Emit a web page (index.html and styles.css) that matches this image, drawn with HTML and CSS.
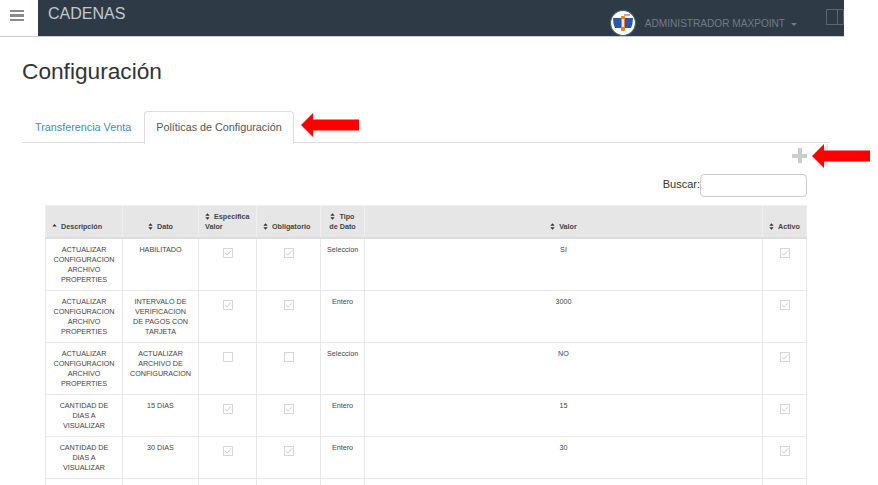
FILE: index.html
```
<!DOCTYPE html>
<html lang="es">
<head>
<meta charset="utf-8">
<title>Configuración</title>
<link rel="stylesheet" href="styles.css">
</head>
<body>
<svg class="defs" width="0" height="0" aria-hidden="true">
  <symbol id="sort" viewBox="0 0 6 8"><path d="M3 0 5.600 3.200H.400zM3 8 .400 4.800h5.200z"/></symbol>
  <symbol id="sort-up" viewBox="0 0 6 8"><path d="M3 1 5.600 4H.400z"/></symbol>
  <symbol id="tick" viewBox="1 1 9.500 9.500"><path d="M2 5.800 4.600 8.200 9.400 2.600" fill="none" stroke="#c4c4c4" stroke-width="1"/></symbol>
  <symbol id="arrow" viewBox="0 0 58 24"><path d="M0 12 12 0V6.500H58V17.500H12V24z" fill="#f00"/></symbol>
</svg>
<header class="topbar">
  <button class="menu-btn" aria-label="Menú"><span></span><span></span><span></span></button>
  <div class="brand">CADENAS</div>
  <div class="user">
    <svg class="avatar" viewBox="0 0 26 26" aria-hidden="true">
      <circle cx="13" cy="13" r="12.500" fill="#fff" stroke="#3d6b5c" stroke-width="1.200"/>
      <path d="M3 8h8v10H5Q3 14 3 8zM15 8h8q0 6-2 10H15z" fill="#2a5aa3"/>
      <rect x="11" y="6" width="4" height="15" rx="1" fill="#ef7d22"/>
      <rect x="12.200" y="9" width="1.600" height="8" fill="#fff"/>
      <path d="M14 4h6v2h-6z" fill="#d9a0a0"/>
    </svg>
    <span class="user-name">ADMINISTRADOR MAXPOINT</span>
    <span class="caret"></span>
  </div>
  <svg class="panel" viewBox="0 0 18 16" aria-hidden="true"><path d="M.5.500h17v15H.5zM11.500.500v15" fill="none" stroke="#5d6672"/></svg>
</header>
<main class="page">
  <h1 class="title">Configuración</h1>
  <nav class="tabs">
    <a class="tab">Transferencia Venta</a>
    <a class="tab tab-active">Políticas de Configuración</a>
    <svg class="arrow arrow-tab" aria-hidden="true"><use href="#arrow"/></svg>
  </nav>
  <div class="toolbar">
    <span class="plus" aria-label="Agregar"></span>
    <span class="arrow-shadow"></span>
    <svg class="arrow arrow-plus" aria-hidden="true"><use href="#arrow"/></svg>
  </div>
  <div class="search"><label for="q">Buscar:</label><input id="q" type="text"></div>
  <table class="grid">
    <colgroup><col class="c1"><col class="c2"><col class="c3"><col class="c4"><col class="c5"><col class="c6"><col class="c7"></colgroup>
    <thead>
      <tr>
        <th class="left"><svg class="s"><use href="#sort-up"/></svg>Descripción</th>
        <th><svg class="s"><use href="#sort"/></svg>Dato</th>
        <th class="left"><svg class="s"><use href="#sort"/></svg>Especifica Valor</th>
        <th class="left"><svg class="s"><use href="#sort"/></svg>Obligatorio</th>
        <th><svg class="s"><use href="#sort"/></svg>Tipo de Dato</th>
        <th><svg class="s"><use href="#sort"/></svg>Valor</th>
        <th><svg class="s"><use href="#sort"/></svg>Activo</th>
      </tr>
    </thead>
    <tbody>
      <tr>
        <td>ACTUALIZAR CONFIGURACION ARCHIVO PROPERTIES</td><td>HABILITADO</td>
        <td><span class="cb"><svg><use href="#tick"/></svg></span></td><td><span class="cb"><svg><use href="#tick"/></svg></span></td>
        <td>Seleccion</td><td>SI</td><td><span class="cb"><svg><use href="#tick"/></svg></span></td>
      </tr>
      <tr>
        <td>ACTUALIZAR CONFIGURACION ARCHIVO PROPERTIES</td><td>INTERVALO DE VERIFICACION DE PAGOS CON TARJETA</td>
        <td><span class="cb"><svg><use href="#tick"/></svg></span></td><td><span class="cb"><svg><use href="#tick"/></svg></span></td>
        <td>Entero</td><td>3000</td><td><span class="cb"><svg><use href="#tick"/></svg></span></td>
      </tr>
      <tr>
        <td>ACTUALIZAR CONFIGURACION ARCHIVO PROPERTIES</td><td>ACTUALIZAR ARCHIVO DE CONFIGURACION</td>
        <td><span class="cb"></span></td><td><span class="cb"></span></td>
        <td>Seleccion</td><td>NO</td><td><span class="cb"><svg><use href="#tick"/></svg></span></td>
      </tr>
      <tr>
        <td>CANTIDAD DE DIAS A VISUALIZAR</td><td>15 DIAS</td>
        <td><span class="cb"><svg><use href="#tick"/></svg></span></td><td><span class="cb"><svg><use href="#tick"/></svg></span></td>
        <td>Entero</td><td>15</td><td><span class="cb"><svg><use href="#tick"/></svg></span></td>
      </tr>
      <tr>
        <td>CANTIDAD DE DIAS A VISUALIZAR</td><td>30 DIAS</td>
        <td><span class="cb"><svg><use href="#tick"/></svg></span></td><td><span class="cb"><svg><use href="#tick"/></svg></span></td>
        <td>Entero</td><td>30</td><td><span class="cb"><svg><use href="#tick"/></svg></span></td>
      </tr>
      <tr class="cut"><td></td><td></td><td></td><td></td><td></td><td></td><td></td></tr>
    </tbody>
  </table>
</main>
</body>
</html>
```
FILE: styles.css
```
html, body {
  margin: 0;
  height: 485px;
  overflow: hidden;
  background: #fff;
}
body {
  font-family: "Liberation Sans", Arial, sans-serif;
  color: #333;
  width: 878px;
}
.defs { position: absolute; }

.topbar {
  width: 844px;
  height: 37px;
  background: #2f3a47;
  border-bottom: 1px solid #c9ccd0;
  box-sizing: border-box;
  display: flex;
  align-items: flex-start;
}
.menu-btn {
  width: 38px;
  height: 36px;
  padding: 10px 10px 0;
  border: 0;
  background: #fff;
  display: flex;
  flex-direction: column;
  gap: 2px;
  box-sizing: border-box;
}
.menu-btn span {
  display: block;
  width: 14px;
  height: 2.400px;
  background: #8a8a8a;
}
.brand {
  margin-left: 10px;
  font-size: 16px;
  line-height: 27px;
  color: #c4c8cd;
}
.user {
  margin-left: auto;
  display: flex;
  align-items: center;
  height: 26px;
  margin-top: 10px;
}
.avatar { width: 26px; height: 26px; }
.user-name {
  margin-left: 9px;
  font-size: 10.100px;
  color: #737b85;
}
.caret {
  margin-left: 6px;
  margin-top: 2px;
  border-top: 3px solid #737b85;
  border-left: 3px solid transparent;
  border-right: 3px solid transparent;
}
.panel {
  width: 18px;
  height: 16px;
  margin: 9px 0 0 29px;
  flex: none;
}

.page {
  position: relative;
  padding: 0 71px 0 22px;
  width: 785px;
}
.title {
  margin: 20px 0 0;
  font-size: 22.700px;
  font-weight: 400;
  line-height: 28px;
  color: #333;
}
.tabs {
  position: relative;
  display: flex;
  margin-top: 26px;
  height: 31px;
  width: 808px;
  border-bottom: 1px solid #ddd;
  font-size: 10.800px;
}
.tab {
  padding: 0 12px;
  line-height: 31px;
  color: #428bca;
  border: 1px solid transparent;
  border-bottom: 0;
  height: 31px;
}
.tab-active {
  padding: 0 11px;
  color: #555;
  background: #fff;
  border-color: #ddd;
  border-radius: 4px 4px 0 0;
  height: 32px;
  box-sizing: content-box;
}
.arrow { position: absolute; width: 58px; height: 24px; }
.arrow-tab { left: 279px; top: 2px; }
.toolbar {
  position: relative;
  height: 31px;
  display: flex;
  justify-content: flex-end;
  padding-top: 5px;
  box-sizing: border-box;
}
.plus {
  display: block;
  width: 15px;
  height: 15px;
  background:
    linear-gradient(#ccc, #ccc) center / 15px 4px no-repeat,
    linear-gradient(#ccc, #ccc) center / 4px 15px no-repeat;
}
.arrow-shadow {
  position: absolute;
  left: 794px;
  top: 1px;
  width: 12px;
  height: 24px;
  background: #e6e6e6;
  clip-path: polygon(0 50%, 100% 0, 100% 100%);
}
.arrow-plus { left: 790px; top: 1px; }
.search {
  display: flex;
  justify-content: flex-end;
  align-items: center;
  font-size: 11px;
  line-height: 21px;
  color: #333;
}
.search label { padding-bottom: 2px; }
.search input {
  width: 107px;
  height: 23px;
  box-sizing: border-box;
  margin: 0;
  border: 1px solid #ccc;
  border-radius: 4px;
}

.grid {
  table-layout: fixed;
  border-collapse: collapse;
  margin: 8px 0 0 23px;
  width: 761px;
  font-size: 7.200px;
  line-height: 10px;
  color: #444;
}
.c1 { width: 77px; }
.c2 { width: 76px; }
.c3 { width: 58px; }
.c4 { width: 64px; }
.c5 { width: 44px; }
.c6 { width: 398px; }
.c7 { width: 44px; }
.grid th, .grid td {
  border: 1px solid #e8e8e8;
  text-align: center;
}
.grid th {
  height: 32px;
  box-sizing: border-box;
  background: #e6e6e6;
  border-color: #efefef;
  border-bottom: 2px solid #ddd;
  vertical-align: bottom;
  padding: 5px 6px 5px;
  font-weight: 700;
}
.grid th.left { text-align: left; }
.grid td {
  padding: 6px 6px 5px;
  vertical-align: top;
}
.s {
  width: 5px;
  height: 7px;
  margin-right: 4px;
  fill: #333;
  vertical-align: -1px;
}
.cb {
  display: inline-block;
  width: 10px;
  height: 10px;
  box-sizing: border-box;
  border: 1px solid #d6d6d6;
  background: #fff;
  margin-top: 3px;
  vertical-align: top;
}
.cb svg { display: block; width: 8px; height: 8px; }
.cut td { height: 30px; }
```
